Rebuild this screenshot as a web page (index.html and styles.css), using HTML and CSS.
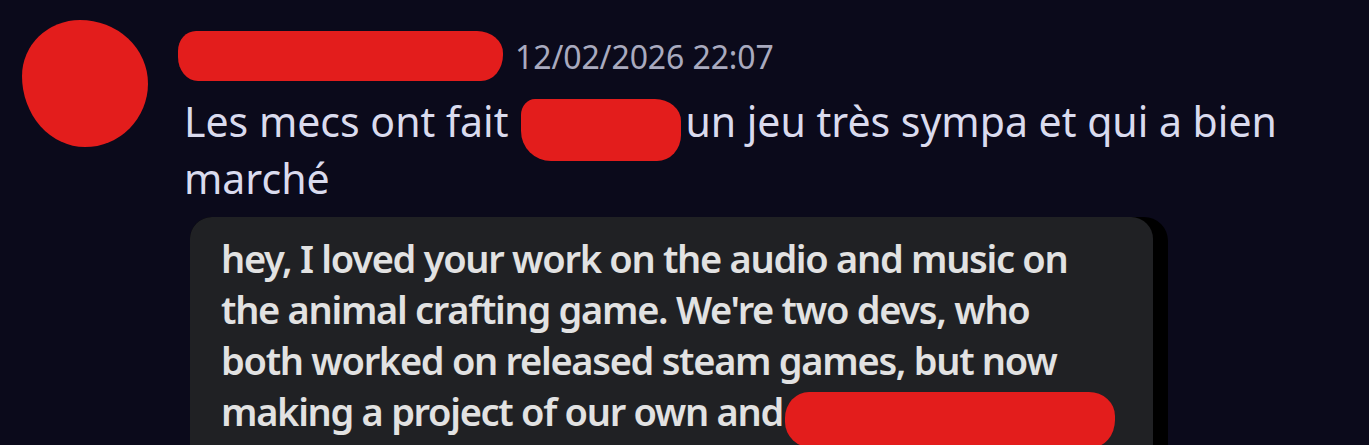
FILE: index.html
```html
<!DOCTYPE html>
<html lang="fr">
<head>
<meta charset="utf-8">
<title>Message</title>
<link rel="stylesheet" href="styles.css">
</head>
<body>
<div class="message">
  <div class="avatar"></div>
  <div class="content">
    <div class="header">
      <span class="redact name-redact"></span>
      <span class="timestamp">12/02/2026 22:07</span>
    </div>
    <p class="text">Les mecs ont fait<span class="redact inline-redact"></span>un jeu très sympa et qui a bien marché</p>
    <div class="embed">
      <div class="embed-inner">
        <p class="embed-text">hey, I loved your work on the audio and music on<br>the animal crafting game. We're two devs, who<br>both worked on released steam games, but now<br>making a project of our own and<span class="redact embed-redact"></span></p>
      </div>
    </div>
  </div>
</div>
</body>
</html>
```

FILE: styles.css
```css
html, body {
  margin: 0;
  padding: 0;
  background: #0b0a1b;
  overflow: hidden;
}

.message {
  display: flex;
  align-items: flex-start;
  padding: 20px 0 0 22px;
  font-family: "Noto Sans", "Open Sans", sans-serif;
}

.avatar {
  flex: 0 0 auto;
  width: 126px;
  height: 127px;
  background: #e31d1c;
  border-radius: 46% 54% 50% 50% / 44% 50% 50% 56%;
}

.content {
  margin-left: 36px;
  padding-top: 10px;
  display: flex;
  flex-direction: column;
}

.redact {
  background: #e31d1c;
}

.header {
  display: flex;
  align-items: flex-start;
  height: 64px;
}

.name-redact {
  display: block;
  width: 325px;
  height: 50px;
  margin-left: -6px;
  margin-top: 1px;
  border-radius: 18px 26px 22px 20px / 20px 22px 26px 24px;
}

.timestamp {
  margin-left: 12px;
  margin-top: 6px;
  font-size: 32px;
  line-height: 42px;
  color: #a9aabf;
  letter-spacing: -0.1px;
}

.text {
  margin: 0;
  max-width: 1150px;
  font-size: 41px;
  line-height: 55px;
  color: #dadbee;
}

.inline-redact {
  display: inline-block;
  width: 160px;
  height: 62px;
  margin: -10px 4px -10px 13px;
  vertical-align: -14px;
  border-radius: 14px 26px 24px 30px / 16px 22px 26px 30px;
}

.embed {
  margin-top: 11px;
  margin-left: 6px;
  width: 978px;
  background: #000;
  border-radius: 22px 24px 0 0;
}

.embed-inner {
  width: 963px;
  background: #202124;
  border-radius: 22px 22px 0 0;
  padding: 16px 0 40px 31px;
  box-sizing: border-box;
}

.embed-text {
  margin: 0;
  font-size: 38px;
  font-weight: 600;
  line-height: 51px;
  letter-spacing: -1.3px;
  color: #e2e2e2;
}

.embed-redact {
  display: inline-block;
  width: 330px;
  height: 56px;
  margin: -10px 0 -10px 2px;
  vertical-align: -12px;
  border-radius: 24px 26px 24px 28px / 26px 24px 28px 26px;
}
```
